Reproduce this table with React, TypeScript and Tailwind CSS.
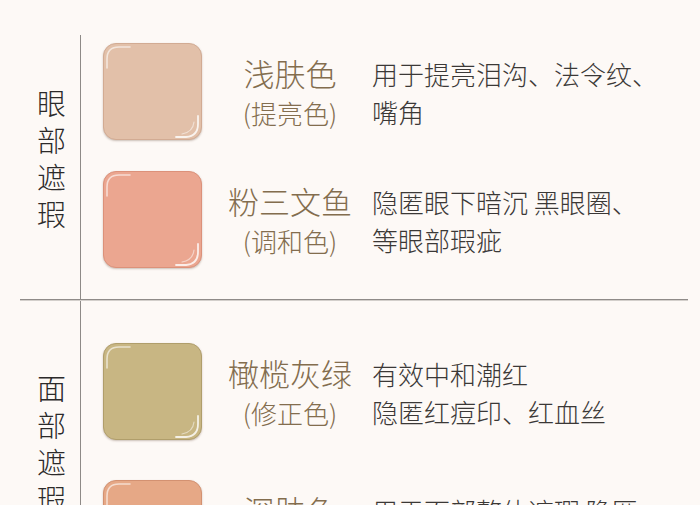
import React from "react";

type Item = { color: string; edge: string; name: string; sub: string; d1: string; d2: string };

const eye: Item[] = [
  { color: "#e2c0a9", edge: "#d2ab93", name: "浅肤色", sub: "(提亮色)", d1: "用于提亮泪沟、法令纹、", d2: "嘴角" },
  { color: "#eba690", edge: "#dc917a", name: "粉三文鱼", sub: "(调和色)", d1: "隐匿眼下暗沉 黑眼圈、", d2: "等眼部瑕疵" },
];
const face: Item[] = [
  { color: "#c8b683", edge: "#b09e6b", name: "橄榄灰绿", sub: "(修正色)", d1: "有效中和潮红", d2: "隐匿红痘印、红血丝" },
  { color: "#e6a886", edge: "#d39171", name: "深肤色", sub: "(遮瑕色)", d1: "用于面部整体遮瑕 隐匿", d2: "肤色不均" },
];

function Swatch({ color, edge }: { color: string; edge: string }) {
  return (
    <div
      className="relative w-[99px] h-[97px] shrink-0 rounded-[13px] shadow-[0_1px_2px_rgba(90,60,40,0.3)]"
      style={{ backgroundColor: color, border: `1px solid ${edge}` }}
    >
      <svg className="absolute inset-0" width="99" height="97" viewBox="0 0 99 97" fill="none">
        <path d="M3 24 L3 15 Q3 3 15 3 L26 3" stroke="white" strokeOpacity="0.6" strokeWidth="1.6" strokeLinecap="round" />
        <path d="M94 72 L94 80 Q94 92 82 93 L72 93" stroke="white" strokeOpacity="0.8" strokeWidth="1.8" strokeLinecap="round" />
        <path d="M90 78 Q89 88 78 90" stroke="white" strokeOpacity="0.5" strokeWidth="1.2" strokeLinecap="round" />
      </svg>
    </div>
  );
}

function Row({ it, className }: { it: Item; className?: string }) {
  return (
    <div className={"flex items-center " + (className ?? "")}>
      <div className="ml-[22px]">
        <Swatch color={it.color} edge={it.edge} />
      </div>
      <div className="ml-[23px] w-[130px] flex flex-col items-center text-[#836d4e] pt-[3px]">
        <div className="text-[31px] leading-[40px] whitespace-nowrap">{it.name}</div>
        <div className="text-[26px] leading-[40px] whitespace-nowrap">{it.sub}</div>
      </div>
      <div className="ml-[17px] flex flex-col text-[26px] leading-[38px] text-[#3b3836] pt-[3px]">
        <div className="whitespace-nowrap">{it.d1}</div>
        <div className="whitespace-nowrap">{it.d2}</div>
      </div>
    </div>
  );
}

function Label({ text }: { text: string }) {
  return (
    <div className="flex flex-col text-[29px] leading-[37px] text-[#2c2a2a]">
      {text.split("").map((c, i) => (
        <span key={i}>{c}</span>
      ))}
    </div>
  );
}

export default function App() {
  return (
    <div
      className="w-[700px] h-[505px] overflow-hidden bg-[#fdf9f6] font-light"
      style={{ fontFamily: '"Noto Sans CJK SC", "Noto Sans", sans-serif' }}
    >
      <div className="h-[35px]" />
      <div className="flex h-[264px]">
        <div className="w-[81px] shrink-0 border-r border-[#8e8a87] pl-[37px] pt-[49px]">
          <Label text="眼部遮瑕" />
        </div>
        <div className="flex flex-col pt-[8px]">
          <Row it={eye[0]} />
          <Row it={eye[1]} className="mt-[31px]" />
        </div>
      </div>
      <div className="flex">
        <div className="w-[20px] shrink-0" />
        <div className="w-[668px] flex flex-col">
          <div className="h-px bg-[#8f8b88]" />
          <div className="h-px bg-[#d3cfcb]" />
        </div>
      </div>
      <div className="flex h-[300px]">
        <div className="w-[81px] shrink-0 border-r border-[#8e8a87] pl-[37px] pt-[68px]">
          <Label text="面部遮瑕" />
        </div>
        <div className="flex flex-col pt-[42px]">
          <Row it={face[0]} />
          <Row it={face[1]} className="mt-[40px]" />
        </div>
      </div>
    </div>
  );
}
